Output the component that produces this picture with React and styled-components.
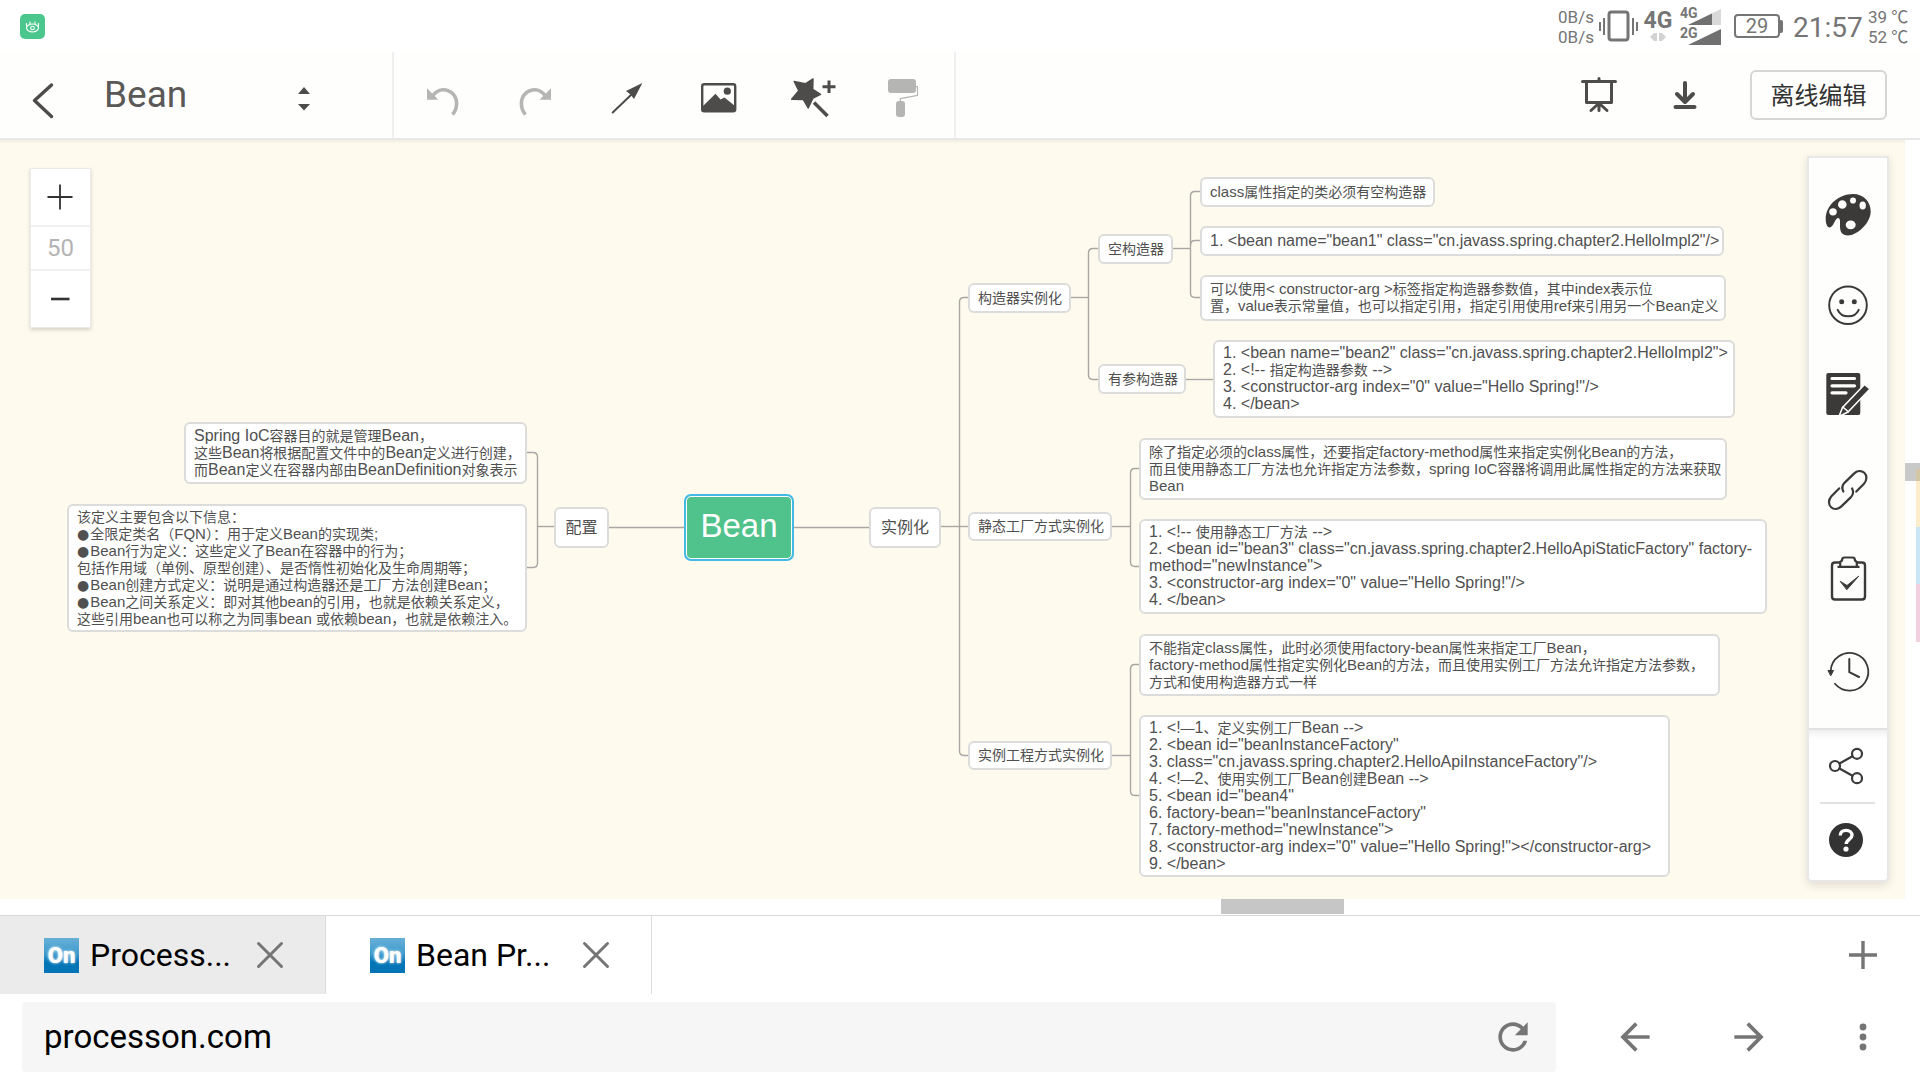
import React from "react";
import styled, { createGlobalStyle } from "styled-components";

const GlobalStyle = createGlobalStyle`
  * { box-sizing: border-box; }
  body { margin: 0; background: #fff; font-family: Roboto, "Noto Sans CJK SC", sans-serif; }
  button { border: 0; padding: 0; background: none; font: inherit; color: inherit; cursor: pointer; }
  svg { display: block; overflow: visible; flex: none; }
`;

const Screen = styled.div`
  display: flex;
  flex-direction: column;
  min-height: 100vh;
  background: #fff;
`;

/* ---------- status bar ---------- */

const StatusBar = styled.div`
  display: flex;
  align-items: center;
  justify-content: space-between;
  height: 52px;
  padding: 0 12px 0 20px;
  color: #757575;
`;

const StatusGroup = styled.div`
  display: flex;
  align-items: center;
`;

const Pair = styled.div`
  display: flex;
  flex-direction: column;
  width: ${(p) => p.$width}px;
  padding-top: 2px;
  font-size: 17px;
  line-height: 20px;
  white-space: nowrap;
`;

const Network = styled.div`
  display: flex;
  flex-direction: column;
  align-items: center;
  width: 42px;
  padding-right: 2px;
  font-size: 23px;
  font-weight: 700;
  line-height: 22px;
`;

const Signals = styled.div`
  display: flex;
  flex-direction: column;
  gap: 3px;
  width: 54px;
`;

const Signal = styled.div`
  display: flex;
  height: 17px;
  font-size: 14px;
  font-weight: 700;
  line-height: 10px;
  svg { margin-left: -10px; }
`;

const Battery = styled.div`
  display: flex;
  align-items: center;
  margin-right: 10px;
  &::after {
    content: "";
    width: 3px;
    height: 13px;
    background: #757575;
    border-radius: 0 2px 2px 0;
  }
`;

const BatteryLevel = styled.div`
  width: 46px;
  height: 24px;
  border: 2px solid #757575;
  border-radius: 4px;
  font-size: 20px;
  line-height: 21px;
  text-align: center;
`;

const Clock = styled.div`
  width: 75px;
  padding-top: 3px;
  font-size: 28px;
  line-height: 32px;
`;

/* ---------- editor header ---------- */

const Header = styled.header`
  display: flex;
  height: 88px;
  background: #fefefd;
  border-bottom: 2px solid #e8e8e8;
  color: #4d4c4a;
`;

const FilePart = styled.div`
  display: flex;
  align-items: center;
  width: 394px;
  padding: 0 58px 0 19px;
  border-right: 2px solid #efefef;
`;

const Title = styled.h1`
  flex: 1;
  margin: 0 0 0 37px;
  font-size: 37px;
  font-weight: 400;
  line-height: 44px;
  color: #5a5957;
`;

const Tools = styled.div`
  display: flex;
  align-items: center;
  padding: 0 5px 0 3px;
  border-right: 2px solid #efefef;
`;

const ToolButton = styled.button`
  display: flex;
  align-items: center;
  justify-content: center;
  width: ${(p) => p.$width}px;
  height: 60px;
  color: ${(p) => (p.$muted ? "#b5b5b3" : "#4d4c4a")};
`;

const Actions = styled.div`
  display: flex;
  align-items: center;
  margin-left: auto;
  padding-right: 33px;
`;

const OfflineButton = styled.button`
  width: 137px;
  height: 50px;
  margin-left: 22px;
  padding-bottom: 3px;
  border: 2px solid #d6d6d6;
  border-radius: 6px;
  font-size: 24px;
  color: #323232;
`;

/* ---------- canvas ---------- */

const Workspace = styled.main`
  display: flex;
  flex: 1;
  min-height: 758px;
`;

const Canvas = styled.div`
  position: relative;
  display: flex;
  justify-content: space-between;
  align-items: flex-start;
  flex: 1;
  padding: 16px 16px 12px 30px;
  background: #fffaee;
  box-shadow: inset 0 4px 4px -3px rgba(0, 0, 0, 0.08);
`;

const MapLayer = styled.div`
  position: absolute;
  inset: 0;
  overflow: hidden;
`;

const Topic = styled.div`
  position: absolute;
  display: flex;
  flex-direction: column;
  justify-content: center;
  padding: 0 8px;
  border: 2px solid #dcdcda;
  border-radius: 6px;
  background: #fff;
  color: #505050;
  font-family: "Liberation Sans", "Noto Sans CJK SC", sans-serif;
  font-size: 14px;
  line-height: 17px;
  white-space: pre;
`;

const TopicLine = styled.div`
  height: 17px;
`;

const Latin = styled.span`
  font-size: ${(p) => p.$size}px;
  line-height: 0;
`;

const Bullet = styled.span`
  margin-right: 1px;
  font-family: "DejaVu Sans", sans-serif;
  line-height: 0;
`;

const MainTopic = styled(Topic)`
  align-items: center;
  font-size: 16px;
`;

const RootTopic = styled(Topic)`
  align-items: center;
  padding: 0 0 4px;
  border: 1px solid #fff;
  border-radius: 5px;
  background: #50c28b;
  color: #fff;
  font-size: 33px;
  box-shadow: 0 0 0 2px #45b9e5;
`;

const ZoomBox = styled.div`
  position: relative;
  display: flex;
  flex-direction: column;
  width: 61px;
  margin-top: 12px;
  background: #fff;
  border: 1px solid #eeebe6;
  box-shadow: 0 2px 4px rgba(0, 0, 0, 0.16);
`;

const ZoomButton = styled.button`
  display: flex;
  align-items: center;
  justify-content: center;
  height: 56px;
  padding-right: 2px;
  color: #323232;
`;

const ZoomValue = styled.output`
  height: 46px;
  border: 2px solid #f0f0f0;
  border-width: 2px 0;
  font-size: 24px;
  line-height: 42px;
  text-align: center;
  color: #b4b4b4;
`;

const SidePanel = styled.aside`
  position: relative;
  width: 82px;
  background: #fff;
  border: 2px solid #e8e8e8;
  border-radius: 0 0 5px 5px;
  box-shadow: 0 3px 10px rgba(0, 0, 0, 0.12);
  color: #3b3a39;
`;

const SideTools = styled.div`
  display: flex;
  flex-direction: column;
  padding: 11px 0 13px;
  border-bottom: 2px solid #e2e2e2;
  background: #fefefd;
`;

const SideFooter = styled.div`
  display: flex;
  flex-direction: column;
  align-items: center;
  box-shadow: inset 0 8px 8px -6px rgba(0, 0, 0, 0.1);
`;

const SideButton = styled.button`
  display: flex;
  align-items: center;
  justify-content: center;
  width: 78px;
  height: ${(p) => p.$height}px;
`;

const SideRule = styled.hr`
  width: 55px;
  height: 2px;
  margin: 1px 2px 0 0;
  border: 0;
  background: #e2e2e2;
`;

const VerticalTrack = styled.div`
  display: flex;
  flex-direction: column;
  width: 15px;
  padding-top: 323px;
`;

const VerticalThumb = styled.div`
  display: flex;
  justify-content: flex-end;
  align-items: flex-end;
  height: 18px;
  background: #c9c9c9;
`;

const Marker = styled.div`
  align-self: flex-end;
  width: 4px;
  height: ${(p) => p.$height}px;
  background: ${(p) => p.$color};
`;

const HorizontalTrack = styled.div`
  display: flex;
  height: 16px;
  padding-left: 1221px;
`;

const HorizontalThumb = styled.div`
  width: 123px;
  height: 15px;
  background: #c6c6c6;
`;

/* ---------- browser chrome ---------- */

const TabStrip = styled.nav`
  display: flex;
  align-items: center;
  height: 79px;
  border-top: 1px solid #d9d9d9;
`;

const Tab = styled.div`
  display: flex;
  align-items: center;
  align-self: stretch;
  width: 326px;
  padding: 0 30px 0 44px;
  border-right: 1px solid #dcdcdc;
  background: ${(p) => (p.$dim ? "#ebebeb" : "#fff")};
`;

const TabTitle = styled.button`
  display: flex;
  align-items: center;
  gap: 11px;
  flex: 1;
  font-size: 32px;
  line-height: 40px;
  color: #000;
`;

const Favicon = styled.span`
  width: 35px;
  height: 35px;
  background: linear-gradient(#67b0d8 0, #3e9bcc 45%, #0374b6 70%, #0374b6 100%);
  color: #fff;
  font-size: 22px;
  font-weight: 900;
  line-height: 36px;
  text-align: center;
  text-shadow: 0 0 3px #fff;
`;

const IconButton = styled.button`
  display: flex;
  align-items: center;
  justify-content: center;
  width: ${(p) => p.$width}px;
  height: 50px;
  color: #757575;
`;

const PushRight = styled.div`
  margin-left: auto;
`;

const AddressRow = styled.div`
  display: flex;
  align-items: center;
  padding: 8px 0 8px 22px;
`;

const AddressBox = styled.div`
  display: flex;
  align-items: center;
  flex: 1;
  height: 70px;
  margin-right: 22px;
  padding: 0 14px 0 22px;
  border-radius: 4px;
  background: #f6f6f6;
`;

const AddressInput = styled.input`
  flex: 1;
  min-width: 0;
  padding: 0;
  border: 0;
  outline: 0;
  background: none;
  color: #000;
  font: 33px/40px Roboto, sans-serif;
`;

/* ---------- drawings ---------- */

const Icon = ({ children, size = 48, box = 48 }) => (
  <svg width={size} height={size} viewBox={`0 0 ${box} ${box}`} fill="none" stroke="currentColor" strokeLinecap="round" strokeLinejoin="round" aria-hidden="true">
    {children}
  </svg>
);

const undoShape = (
  <>
    <path d="M14 24.5C17 20.5 20.5 18.7 24 18.7C32 18.7 37.6 25 37.6 32.3C37.6 37 36 41 33.5 43.6" strokeWidth="3.6" strokeLinecap="butt" />
    <path d="M8 17.3V28.8H19.4Z" fill="currentColor" stroke="none" />
  </>
);

const tools = [
  ["撤销", true, undoShape],
  ["重做", true, <g transform="translate(48 0) scale(-1 1)">{undoShape}</g>],
  ["关联线", false,
    <>
      <path d="M9.7 41.5L29 23" strokeWidth="2" />
      <path d="M39.4 12L23 20L27.5 23.5L31 28Z" fill="currentColor" stroke="none" />
    </>],
  ["图片", false,
    <>
      <rect x="7.2" y="13.2" width="33" height="27" rx="2" strokeWidth="2.4" />
      <circle cx="32.3" cy="20.2" r="3.6" fill="currentColor" stroke="none" />
      <path d="M8 35L20.5 22.7L25.5 28.5L29.5 26.5L40 35V40H8Z" fill="currentColor" stroke="none" />
    </>],
  ["美化", false,
    <>
      <path d="M26 8L25.7 18.3L33.5 23.3L26 27L21.2 37L16.3 28.5L4.7 28.3L11.8 19.7L7.2 10.5L18.3 12.8Z" fill="currentColor" strokeWidth="1.5" />
      <path d="M42 9.5V22M35.5 15.7H48.5" strokeWidth="3" strokeLinecap="butt" />
      <path d="M27 31.5L40.5 45" strokeWidth="3.6" strokeLinecap="butt" />
    </>],
  ["格式刷", true,
    <>
      <rect x="9" y="8" width="28" height="14" rx="3" fill="currentColor" stroke="none" />
      <path d="M37 15.7H38.5V24.3L21.4 27.7V31" strokeWidth="1.2" />
      <rect x="17" y="30" width="9" height="16" rx="3" fill="currentColor" stroke="none" />
    </>],
];

const sideTools = [
  ["风格",
    <path fillRule="evenodd" fill="currentColor" stroke="none" d="M1.7 28C1.7 14 15 3 29 3C40 3 46.7 11 46.7 20.5C46.7 32 33 44.5 24 44.5C18 44.5 16 41 16 35C16 31 16.5 27 14 27C11 27 9.5 36.5 5.5 36.5C3 36.5 1.7 32 1.7 28ZM5.2 20.8a3.8 3.6 0 1 0 7.6 0a3.8 3.6 0 1 0 -7.6 0ZM14 13.5a4.3 4.3 0 1 0 8.6 0a4.3 4.3 0 1 0 -8.6 0ZM26 9.5a3 3.1 0 1 0 6 0a3 3.1 0 1 0 -6 0ZM35.5 14.5a3.2 4 0 1 0 6.4 0a3.2 4 0 1 0 -6.4 0ZM21.7 33.8a5 4.4 0 1 0 10 0a5 4.4 0 1 0 -10 0Z" />],
  ["图标",
    <>
      <circle cx="24" cy="23.2" r="18.8" strokeWidth="2" />
      <circle cx="17.7" cy="19.8" r="2.5" fill="currentColor" stroke="none" />
      <circle cx="30.3" cy="19.8" r="2.5" fill="currentColor" stroke="none" />
      <path d="M13.7 27.8C17.5 36.5 31 36.5 34.7 27.8" strokeWidth="2" />
    </>],
  ["备注",
    <>
      <rect x="2.3" y="0" width="34" height="42" rx="2" fill="currentColor" stroke="none" />
      <path d="M8 5.5H30.5M8 12.8H30.5M8 19.8H22" stroke="#fff" strokeWidth="3.2" />
      <path d="M15 43.5L18.5 34.5L40.5 11.5L46 16L24 39Z" fill="currentColor" stroke="#fff" strokeWidth="1.6" />
      <path d="M18.8 34L24.3 38.8" stroke="#fff" strokeWidth="1.5" />
    </>],
  ["链接",
    <>
      <path d="M32.3 27.6L40 19.8C43 16.5 43.3 11.5 40.3 8.8C37.3 6.2 33 6.7 30 9.6L20.7 18.6C18 21.4 17.7 24.4 19.3 27.5" strokeWidth="2.2" />
      <path d="M15.1 24.4L7.4 32.2C4.4 35.5 4.1 40.5 7.1 43.2C10.1 45.8 14.4 45.3 17.4 42.4L26.7 33.4C29.4 30.6 29.7 27.6 28.1 24.5" strokeWidth="2.2" />
    </>],
  ["任务",
    <>
      <path d="M15.5 7.5H11Q8 7.5 8 10.5V41.5Q8 44.5 11 44.5H38Q41 44.5 41 41.5V10.5Q41 7.5 38 7.5H33" strokeWidth="2.4" />
      <path d="M13.5 11.8H35.5M16.2 11V6.8Q18 6.5 18.3 4Q18.5 2.5 20.5 2.5H28.5Q30.5 2.5 30.7 4Q31 6.5 32.8 6.8V11" strokeWidth="2.2" strokeLinecap="butt" />
      <path d="M16.5 26.5L23 30.5L34.7 21.2L23 34.5Z" fill="currentColor" strokeWidth="1" />
    </>],
  ["历史",
    <>
      <path d="M11 37.8A18.8 18.8 0 1 0 6.7 25" strokeWidth="1.8" />
      <path d="M4.3 24.5H9.5L6.9 29.5Z" fill="currentColor" strokeWidth="1" />
      <path d="M25.3 13V26.2L35 31" strokeWidth="2" />
    </>],
];

/* ---------- mind map data: x, y, width, height, text, latin size ---------- */

const topics = [
  [968, 143, 103, 30, "构造器实例化"],
  [968, 372, 144, 29, "静态工厂方式实例化"],
  [968, 601, 144, 29, "实例工程方式实例化"],
  [1098, 94, 75, 30, "空构造器"],
  [1098, 224, 88, 30, "有参构造器"],
  [1200, 37, 235, 30, "class属性指定的类必须有空构造器"],
  [1200, 86, 524, 30, "1. <bean name=\"bean1\" class=\"cn.javass.spring.chapter2.HelloImpl2\"/>", 16],
  [1200, 135, 526, 46, "可以使用< constructor-arg >标签指定构造器参数值，其中index表示位\n置，value表示常量值，也可以指定引用，指定引用使用ref来引用另一个Bean定义"],
  [1213, 200, 522, 78, "1. <bean name=\"bean2\" class=\"cn.javass.spring.chapter2.HelloImpl2\">\n2. <!-- 指定构造器参数 -->\n3. <constructor-arg index=\"0\" value=\"Hello Spring!\"/>\n4. </bean>", 16],
  [1139, 298, 588, 62, "除了指定必须的class属性，还要指定factory-method属性来指定实例化Bean的方法，\n而且使用静态工厂方法也允许指定方法参数，spring IoC容器将调用此属性指定的方法来获取\nBean"],
  [1139, 379, 628, 95, "1. <!-- 使用静态工厂方法 -->\n2. <bean id=\"bean3\" class=\"cn.javass.spring.chapter2.HelloApiStaticFactory\" factory-\nmethod=\"newInstance\">\n3. <constructor-arg index=\"0\" value=\"Hello Spring!\"/>\n4. </bean>", 16],
  [1139, 494, 581, 62, "不能指定class属性，此时必须使用factory-bean属性来指定工厂Bean，\nfactory-method属性指定实例化Bean的方法，而且使用实例工厂方法允许指定方法参数，\n方式和使用构造器方式一样"],
  [1139, 575, 531, 162, "1. <!—1、定义实例工厂Bean -->\n2. <bean id=\"beanInstanceFactory\"\n3. class=\"cn.javass.spring.chapter2.HelloApiInstanceFactory\"/>\n4. <!—2、使用实例工厂Bean创建Bean -->\n5. <bean id=\"bean4\"\n6. factory-bean=\"beanInstanceFactory\"\n7. factory-method=\"newInstance\">\n8. <constructor-arg index=\"0\" value=\"Hello Spring!\"></constructor-arg>\n9. </bean>", 16],
  [184, 282, 343, 62, "Spring IoC容器目的就是管理Bean，\n这些Bean将根据配置文件中的Bean定义进行创建，\n而Bean定义在容器内部由BeanDefinition对象表示", 16],
  [67, 364, 460, 128, "该定义主要包含以下信息：\n●全限定类名（FQN）：用于定义Bean的实现类;\n●Bean行为定义：这些定义了Bean在容器中的行为；\n包括作用域（单例、原型创建）、是否惰性初始化及生命周期等；\n●Bean创建方式定义：说明是通过构造器还是工厂方法创建Bean；\n●Bean之间关系定义：即对其他bean的引用，也就是依赖关系定义，\n这些引用bean也可以称之为同事bean 或依赖bean，也就是依赖注入。"],
];

const mainTopics = [
  [554, 367, 55, 41, "配置"],
  [869, 367, 72, 41, "实例化"],
];

const links = [
  "M608 387.5H686M792 387.5H870",
  "M554 386.5H537",
  "M527 312.5H533Q537.5 312.5 537.5 317V423Q537.5 427.5 533 427.5H527",
  "M941 386.5H968",
  "M968 157.5H964Q959.5 157.5 959.5 162V611Q959.5 615.5 964 615.5H968",
  "M1071 157.5H1088",
  "M1098 108.5H1093Q1088.5 108.5 1088.5 113V235Q1088.5 239.5 1093 239.5H1098",
  "M1173 108.5H1190",
  "M1200 51.5H1195Q1190.5 51.5 1190.5 56V153Q1190.5 157.5 1195 157.5H1200",
  "M1200 100.5H1195Q1190.5 100.5 1190.5 105",
  "M1186 239.5H1213",
  "M1112 386.5H1130",
  "M1139 328.5H1135Q1130.5 328.5 1130.5 333V422Q1130.5 426.5 1135 426.5H1139",
  "M1112 615.5H1130",
  "M1139 524.5H1135Q1130.5 524.5 1130.5 529V651Q1130.5 655.5 1135 655.5H1139",
];

const place = ([left, top, width, height]) => ({ left, top, width, height });

/* Latin runs are set a little larger than the Chinese text around them. */
function MixedLine({ text, latin }) {
  return (
    <TopicLine>
      {text.split(/([\x20-\x7e]+|●)/).map((run, i) => {
        if (!run) return null;
        if (run === "●") return <Bullet key={i}>●</Bullet>;
        return i % 2 ? <Latin key={i} $size={latin}>{run}</Latin> : run;
      })}
    </TopicLine>
  );
}

function MindMap() {
  return (
    <MapLayer>
      <svg width="1905" height="759" fill="none" stroke="#a9a7a2" strokeWidth="1.4" aria-hidden="true">
        {links.map((d) => <path key={d} d={d} />)}
      </svg>
      {topics.map((t) => (
        <Topic key={t[4]} style={place(t)}>
          {t[4].split("\n").map((line) => <MixedLine key={line} text={line} latin={t[5] || 15} />)}
        </Topic>
      ))}
      {mainTopics.map((t) => <MainTopic key={t[4]} style={place(t)}>{t[4]}</MainTopic>)}
      <RootTopic style={place([686, 356, 106, 63])}>Bean</RootTopic>
    </MapLayer>
  );
}

function BrowserTab({ title, dim }) {
  return (
    <Tab $dim={dim}>
      <TabTitle><Favicon>On</Favicon>{title}</TabTitle>
      <IconButton $width={50} aria-label="关闭标签页">
        <Icon size={26} box={26}><path d="M1.5 1.5L24.5 24.5M24.5 1.5L1.5 24.5" strokeWidth="3" /></Icon>
      </IconButton>
    </Tab>
  );
}

export default function App() {
  return (
    <Screen>
      <GlobalStyle />
      <StatusBar>
        <svg width="25" height="25" viewBox="0 0 25 25" fill="none" stroke="#fff" strokeWidth="1.1" aria-hidden="true">
          <rect width="25" height="25" rx="5" fill="#4bc78d" stroke="none" />
          <ellipse cx="12.5" cy="14" rx="6" ry="4" />
          <circle cx="12.5" cy="14" r="1.8" />
          <path d="M6.5 12.5V9M10 10V7.5M15 10V7.5M18.5 12.5V9" />
        </svg>
        <StatusGroup>
          <Pair $width={41}><span>0B/s</span><span>0B/s</span></Pair>
          <svg width="39" height="34" viewBox="0 0 39 34" fill="none" stroke="#757575" aria-hidden="true">
            <rect x="10" y="3" width="19" height="28" rx="2.5" strokeWidth="3" />
            <path d="M1 13V22M5 9V26M34 9V26M38 13V22" strokeWidth="2" />
          </svg>
          <Network>
            4G
            <svg width="16" height="10" viewBox="0 0 16 10" fill="#d3d3d3" aria-hidden="true"><path d="M0 5L4 1H7V9H4ZM16 5L12 1H9V9H12Z" /></svg>
          </Network>
          <Signals>
            <Signal>4G<svg width="33" height="17" viewBox="0 0 33 17" aria-hidden="true"><path d="M0 17L33 1V17Z" fill="#d9d9d9" /><path d="M0 17L24 5.4V17Z" fill="#707070" /></svg></Signal>
            <Signal>2G<svg width="33" height="17" viewBox="0 0 33 17" aria-hidden="true"><path d="M0 17L33 1V17Z" fill="#707070" /></svg></Signal>
          </Signals>
          <Battery><BatteryLevel>29</BatteryLevel></Battery>
          <Clock>21:57</Clock>
          <Pair $width={40}><span>39 ℃</span><span>52 ℃</span></Pair>
        </StatusGroup>
      </StatusBar>

      <Header>
        <FilePart>
          <ToolButton $width={48} aria-label="返回">
            <Icon><path d="M32.5 14L15.5 29.5L32.5 45.5" strokeWidth="3.4" /></Icon>
          </ToolButton>
          <Title>Bean</Title>
          <ToolButton $width={60} aria-label="切换文件">
            <Icon><path d="M18 23L24 16L30 23ZM18 33L24 39.5L30 33Z" fill="currentColor" stroke="none" /></Icon>
          </ToolButton>
        </FilePart>
        <Tools>
          {tools.map(([label, muted, drawing]) => (
            <ToolButton key={label} $width={92} $muted={muted} aria-label={label}><Icon>{drawing}</Icon></ToolButton>
          ))}
        </Tools>
        <Actions>
          <ToolButton $width={86} aria-label="演示">
            <Icon>
              <path d="M7.5 10.5H40.5M24 7.5V10M11.5 11V31.5H36.5V11M22 34L16 39.5M24 34V39.5M26 34L32 39.5" strokeWidth="3" />
            </Icon>
          </ToolButton>
          <ToolButton $width={86} aria-label="下载">
            <Icon><path d="M24 12V30M16 23L24 31L32 23M14.5 36H33.5" strokeWidth="4" /></Icon>
          </ToolButton>
          <OfflineButton>离线编辑</OfflineButton>
        </Actions>
      </Header>

      <Workspace>
        <Canvas>
          <MindMap />
          <ZoomBox>
            <ZoomButton aria-label="放大">
              <Icon size={26} box={26}><path d="M0.5 13H25.5M13 0.5V25.5" strokeWidth="1.8" strokeLinecap="butt" /></Icon>
            </ZoomButton>
            <ZoomValue>50</ZoomValue>
            <ZoomButton aria-label="缩小">
              <Icon size={26} box={26}><path d="M4 13H22.5" strokeWidth="2.6" strokeLinecap="butt" /></Icon>
            </ZoomButton>
          </ZoomBox>
          <SidePanel>
            <SideTools>
              {sideTools.map(([label, drawing]) => (
                <SideButton key={label} $height={91} aria-label={label}><Icon>{drawing}</Icon></SideButton>
              ))}
            </SideTools>
            <SideFooter>
              <SideButton $height={71} aria-label="分享">
                <Icon>
                  <circle cx="11" cy="24" r="5" strokeWidth="2.2" />
                  <circle cx="33" cy="11.8" r="5" strokeWidth="2.2" />
                  <circle cx="33" cy="36.2" r="5" strokeWidth="2.2" />
                  <path d="M15.5 21.5L28.5 14.3M15.5 26.5L28.5 33.7" strokeWidth="2.2" />
                </Icon>
              </SideButton>
              <SideRule />
              <SideButton $height={76} aria-label="帮助">
                <Icon>
                  <circle cx="22" cy="22" r="17" fill="#333" stroke="none" />
                  <path d="M16.2 17.5C16.2 14 19 12.4 22 12.4C25.5 12.4 28 14.5 28 17.2C28 21.2 22.2 21.6 22.2 26" stroke="#fff" strokeWidth="3.4" strokeLinecap="butt" />
                  <circle cx="22" cy="31" r="2.6" fill="#fff" stroke="none" />
                </Icon>
              </SideButton>
            </SideFooter>
          </SidePanel>
        </Canvas>
        <VerticalTrack>
          <VerticalThumb><Marker $height={12} $color="#d3c6a4" /></VerticalThumb>
          <Marker $height={46} $color="#fdeecb" />
          <Marker $height={57} $color="#c9e6f6" />
          <Marker $height={58} $color="#f3d0e0" />
        </VerticalTrack>
      </Workspace>
      <HorizontalTrack><HorizontalThumb /></HorizontalTrack>

      <TabStrip>
        <BrowserTab title="Process..." dim />
        <BrowserTab title="Bean Pr..." />
        <PushRight>
          <IconButton $width={114} aria-label="新建标签页">
            <Icon size={30} box={30}><path d="M1 15H29M15 1V29" strokeWidth="3.4" strokeLinecap="butt" /></Icon>
          </IconButton>
        </PushRight>
      </TabStrip>
      <AddressRow>
        <AddressBox>
          <AddressInput aria-label="网址" defaultValue="processon.com" />
          <IconButton $width={58} aria-label="刷新">
            <Icon size={44} box={24}><path fill="currentColor" stroke="none" d="M17.65 6.35C16.2 4.9 14.21 4 12 4c-4.42 0-7.99 3.58-7.99 8s3.57 8 7.99 8c3.73 0 6.84-2.55 7.73-6h-2.08c-.82 2.33-3.04 4-5.65 4-3.31 0-6-2.69-6-6s2.69-6 6-6c1.66 0 3.14.69 4.22 1.78L13 11h7V4l-2.35 2.35z" /></Icon>
          </IconButton>
        </AddressBox>
        <IconButton $width={114} aria-label="后退">
          <Icon size={44} box={24}><path fill="currentColor" stroke="none" d="M20 11H7.83l5.59-5.59L12 4l-8 8 8 8 1.41-1.41L7.83 13H20v-2z" /></Icon>
        </IconButton>
        <IconButton $width={114} aria-label="前进">
          <Icon size={44} box={24}><path fill="currentColor" stroke="none" d="M12 4l-1.41 1.41L16.17 11H4v2h12.17l-5.58 5.59L12 20l8-8z" /></Icon>
        </IconButton>
        <IconButton $width={114} aria-label="更多">
          <Icon size={44} box={44}>
            <g fill="currentColor" stroke="none"><circle cx="22" cy="12" r="3.4" /><circle cx="22" cy="22" r="3.4" /><circle cx="22" cy="32" r="3.4" /></g>
          </Icon>
        </IconButton>
      </AddressRow>
    </Screen>
  );
}
